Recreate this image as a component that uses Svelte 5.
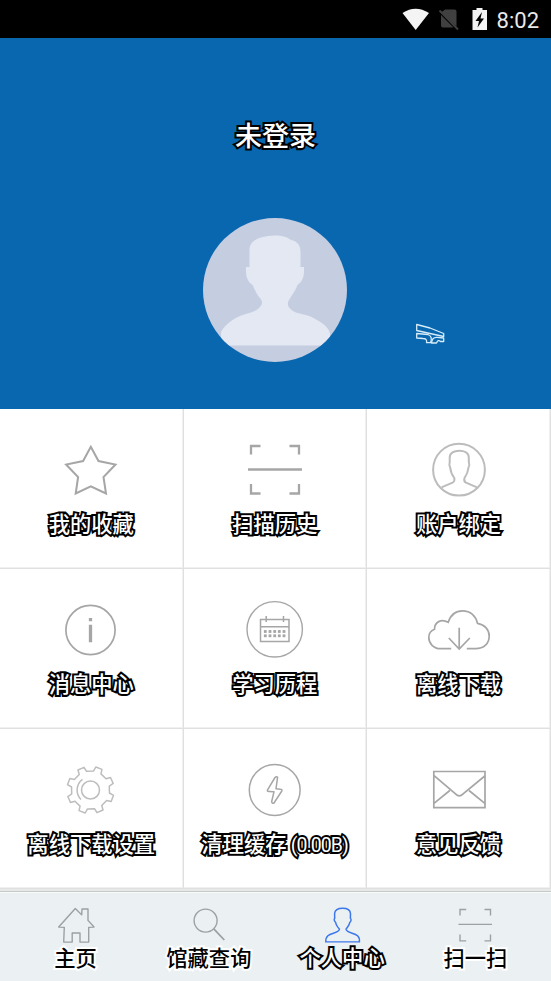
<script>
  const cells = [
    { id: 'star', label: '我的收藏' },
    { id: 'scan', label: '扫描历史' },
    { id: 'account', label: '账户绑定' },
    { id: 'info', label: '消息中心' },
    { id: 'calendar', label: '学习历程' },
    { id: 'cloud', label: '离线下载' },
    { id: 'gear', label: '离线下载设置' },
    { id: 'bolt', label: '清理缓存', extra: '(0.00B)' },
    { id: 'mail', label: '意见反馈' }
  ];
  const tabs = [
    { id: 'home', label: '主页' },
    { id: 'search', label: '馆藏查询' },
    { id: 'me', label: '个人中心', active: true },
    { id: 'scan', label: '扫一扫' }
  ];

  // Eight teeth, each described by polar offsets around the hub.
  const gear = (() => {
    const pts = [];
    for (let k = 0; k < 8; k++) {
      const mid = 21 + k * 45;
      for (const [r, d] of [[19.2, -12], [23.6, -8], [23.6, 8], [19.2, 12]]) {
        const a = ((mid + d) * Math.PI) / 180;
        pts.push(`${(31.5 + r * Math.cos(a)).toFixed(2)} ${(32 + r * Math.sin(a)).toFixed(2)}`);
      }
    }
    return 'M' + pts.join('L') + 'Z';
  })();
</script>

<div class="screen">
  <div class="status">
    <svg width="88" height="38" viewBox="400 0 88 38">
      <path d="M401.500 13Q414.500 4.500 428 13L414.700 30Z" fill="#f4f4f4" />
      <path d="M444 9.500H453.500Q455.500 9.500 455.500 11.500V26.500L440 12.500ZM440 15L452.500 27.500H442Q440 27.500 440 25.500Z" fill="#404040" />
      <path d="M438.500 10.500L457 29.500" stroke="#404040" stroke-width="1.800" />
      <path d="M475.500 8H481.500V10H486V30H471.500V10H475.500Z" fill="#f4f4f4" />
      <path d="M481 12L474.500 21H478L476.500 27.500L483 18.500H479.500Z" fill="#050505" />
    </svg>
    <span class="clock">8:02</span>
  </div>

  <header class="hero">
    <h1 class="outlined">未登录</h1>
    <svg class="avatar" width="144" height="144" viewBox="0 0 144 144">
      <defs><clipPath id="disc"><circle cx="72" cy="72" r="72" /></clipPath></defs>
      <circle cx="72" cy="72" r="72" fill="#c5cde1" />
      <path clip-path="url(#disc)" fill="#e4e8f2" d="M46.500 49V32C46.500 22 57 18 72 17.500C80 17.500 84 19 88 22C94 23 97.500 27 97.500 34V49H101C101.500 58 100 63 94.500 67C92 74 88 78 85.500 83C83 88 88 93 95 95C103 97 108 98 114 102C121 106 126 110 127 116V127.500H18V114C22 107 28 102 37 98C44 95 51 95 56 90C60 86 60 83 56 79C53 75 52 72 49.500 67C44 63 42.500 58 43 49Z" />
    </svg>
    <svg class="mark" width="30" height="24" viewBox="415 322 30 24" fill="none" stroke="#d6ecf8" stroke-width="1.300" stroke-linejoin="round">
      <path d="M416.700 324.500L430 328L443.700 333.500V336.500L430 333.500L416.700 330.500Z" />
      <path d="M416.700 333.500L428 334.500Q433 336.500 430.500 342.700H426.500Q427.500 338.500 423 338.500L416.700 338Z" />
      <path d="M443.700 338V341.500H440.500Q438 339 436.500 343H431.500Q432 337 437 337.300Z" />
    </svg>
  </header>

  <main class="grid">
    {#each cells as c}
      <div class="cell">
        <svg width="64" height="64" viewBox="0 0 64 64" fill="none" stroke="#a6a6a6" stroke-width="1.700">
          {#if c.id === 'star'}
            <path stroke-width="2" d="M31.800 8.800L39.500 23L56.500 26.500L44.500 39L47 55.500L31.800 48.300L16.700 55.500L19.100 39L7.100 26.500L24.100 23Z" />
          {:else if c.id === 'scan'}
            <path stroke-width="2.300" d="M8 16.500V8H17.500M46.500 8H56V16.500M8 46V55.500H17.500M46.500 55.500H56V46" />
            <path stroke-width="2.300" d="M5 31.500H59" />
          {:else if c.id === 'account'}
            <g stroke="#bcbcbc" stroke-width="2">
              <circle cx="32" cy="31.700" r="25.900" />
              <path d="M14.500 49.300L25.500 44.700Q28 43.500 27.300 40Q23.800 35.500 23.200 29.500Q21.800 27 22.700 24V19.500C22.700 15 27 12.700 32.200 12.700S41.800 15 41.800 19.500V24Q43 27 41.500 29.500Q40.800 35.500 37.500 40Q36.500 43.500 39 44.700L50 49.300" />
            </g>
          {:else if c.id === 'info'}
            <circle cx="31.500" cy="32" r="24.600" />
            <path stroke-width="3.300" d="M31.500 26.700V44.300M31.500 20V23.200" />
          {:else if c.id === 'calendar'}
            <circle cx="31.700" cy="31.300" r="27.700" stroke-width="1.400" />
            <path stroke-width="1.500" d="M17.500 21.500H46V43.500H17.500ZM17.500 28.700H46" />
            <path stroke-width="1.500" d="M23.200 18V24M40.500 18V24" />
            {#each [33.500, 37.800] as y}
              {#each [22.300, 27, 31.700, 36.300, 41] as x}
                <rect x={x - 1.400} y={y - 1.400} width="2.800" height="2.800" fill="#a6a6a6" stroke="none" />
              {/each}
            {/each}
          {:else if c.id === 'cloud'}
            <path d="M24.200 50.700H13.500C6.500 50.700 1.800 45.500 1.800 39.300C1.800 35.500 4 32.500 7.500 31.200C7.500 24 14 20.500 21.200 24.300C23.500 17 29 12.800 35.500 12.800C43.500 12.800 49 18 50.500 25.300C58 26.500 62.200 32 62.200 38C62.200 45.500 57 50.700 48.500 50.700H39.800" />
            <path d="M32.200 29.700V51M21.800 40L32.200 51L42.800 40" />
          {:else if c.id === 'gear'}
            <g stroke="#bdbdbd" stroke-width="1.500" stroke-linejoin="round">
              <path d={gear} />
              <circle cx="31.500" cy="32" r="9" />
              <path d="M23.500 21.300A13.400 13.400 0 0 0 22 41.500" />
            </g>
          {:else if c.id === 'bolt'}
            <circle cx="31.700" cy="32" r="25.400" stroke-width="1.500" />
            <path stroke-width="1.500" stroke-linejoin="round" d="M34.600 19.200Q33.600 18 32 19.500L24.400 32.200Q24 33.400 26 33.400L31 33.700L28.700 43.500Q29 46.200 31 45L38.800 33Q39.500 31.200 37.500 31.200L33 30.800Z" />
          {:else}
            <path d="M6.800 13.500H58V49.700H6.800ZM6.800 17.300L28.500 35.800Q32.300 39.800 36.100 35.800L57.800 18M7 45.300L22.800 32.500M42 32.500L57.800 45.300" />
          {/if}
        </svg>
        <span class="outlined label">{c.label}{#if c.extra}<span class="extra">{c.extra}</span>{/if}</span>
      </div>
    {/each}
  </main>

  <nav class="tabs">
    {#each tabs as t}
      <div class="tab">
        <svg width="40" height="38" viewBox="0 0 40 40" preserveAspectRatio="none" fill="none" stroke="#9ca1a3" stroke-width="1.400">
          {#if t.id === 'home'}
            <path stroke-linejoin="round" d="M2.700 23.200L19.300 3.700L25.700 10.400L26 4.200H32V16.200L38 23.200L32.700 23.500V39H24V29.500H16.200V39H7.700L8.300 23.500Z" />
          {:else if t.id === 'search'}
            <ellipse cx="16.600" cy="16.400" rx="11.500" ry="12.100" />
            <path stroke-width="1.800" d="M24.800 25.200L35.300 36.800" />
          {:else if t.id === 'me'}
            <path stroke="#3c78ec" stroke-width="1.500" d="M3.800 38.800C3.500 32 7.500 31 12 29.500Q17 28 17.500 25.500C14.500 22 13.800 20 13.700 18.500C11.800 16.500 12 14.500 12.700 14L12.600 9C13 5 16 3.500 20.600 3.500S28.200 5 28.500 9L28.400 14C29.500 15 29.300 17 27.700 18.500C27.500 20 26.500 22 24 25.500Q24.500 28 29.500 29.500C34 31 38 32 37.400 38.800Z" />
          {:else}
            <path d="M5 11V4.700H11.200M29.500 4.700H35.500V11M5 31V37.700H11.200M29.500 37.700H35.500V31M3.500 20.400H37" />
          {/if}
        </svg>
        <span class="tab-label" class:active={t.active}>{t.label}</span>
      </div>
    {/each}
  </nav>
</div>

<style>
  :global(body) { margin: 0; }
  .screen {
    width: 551px;
    height: 981px;
    display: flex;
    flex-direction: column;
    overflow: hidden;
    background: #fff;
    font-family: Roboto, "Noto Sans CJK SC", sans-serif;
  }
  .status {
    height: 38px;
    flex: none;
    background: #000;
    display: flex;
    justify-content: flex-end;
    align-items: center;
    gap: 8px;
    padding-right: 12px;
  }
  .clock { color: #e9e9e9; font-size: 22px; line-height: 38px; padding-top: 3px; }
  .hero {
    height: 371px;
    flex: none;
    background: #0967b0;
    position: relative;
    display: flex;
    flex-direction: column;
    align-items: center;
  }
  .outlined {
    color: #fff;
    font-weight: 500;
    -webkit-text-stroke: 4px #000;
    paint-order: stroke fill;
    stroke-linejoin: round;
  }
  h1 {
    margin: 79px 0 0;
    font-size: 27px;
    line-height: 40px;
  }
  .avatar { margin: 61px 1px 0 0; }
  .mark { position: absolute; left: 415px; top: 284px; }
  .grid {
    height: 480px;
    flex: none;
    display: grid;
    grid-template-columns: 183.500px 183.500px 184px;
    grid-template-rows: repeat(3, 160px);
  }
  .cell {
    box-sizing: border-box;
    border-right: 1px solid #e0e0e0;
    border-bottom: 1px solid #e0e0e0;
    box-shadow: inset -1px -1px #f0f0f0;
    display: flex;
    flex-direction: column;
    align-items: center;
    padding-top: 29px;
  }
  .label {
    margin-top: 7px;
    font-size: 21.300px;
    line-height: 32px;
    white-space: nowrap;
  }
  .extra { font-size: 19.500px; font-weight: 400; margin-left: 4px; letter-spacing: -0.900px; }
  .tabs {
    flex: 1;
    box-sizing: border-box;
    background: #ebf0f3;
    border-top: 2px solid #e7e9e8;
    box-shadow: inset 0 1px #c5c9c7, inset 0 2px #fafcfc;
    display: flex;
    padding: 14px 9px 0;
  }
  .tab {
    flex: 1;
    display: flex;
    flex-direction: column;
    align-items: center;
  }
  .tab-label {
    margin-top: 0;
    font-size: 21.300px;
    line-height: 32px;
    color: #000;
    font-weight: 500;
    -webkit-text-stroke: 4px #fff;
    paint-order: stroke fill;
  }
  .active { color: #fff; -webkit-text-stroke-color: #000; }
</style>
